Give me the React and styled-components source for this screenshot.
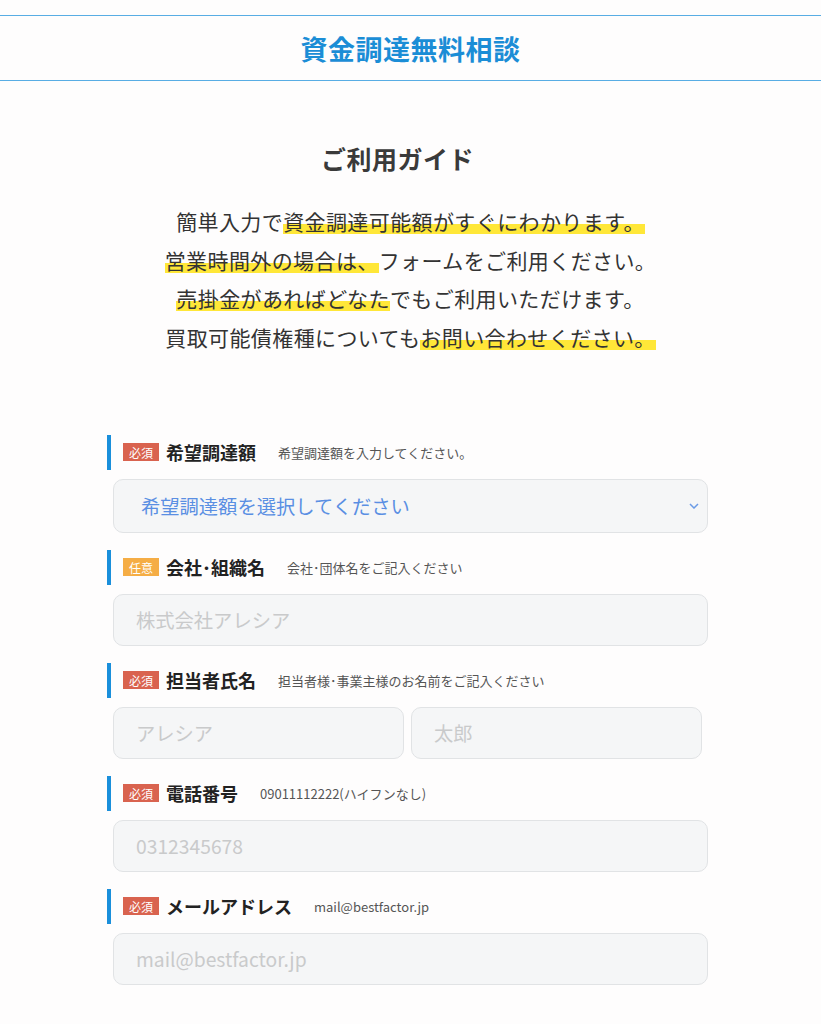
import React from 'react'
import styled, { createGlobalStyle } from 'styled-components'

const GlobalStyle = createGlobalStyle`
  body {
    margin: 0;
    background: #fefdfd;
    font-family: "Noto Sans CJK JP", "Noto Sans", sans-serif;
    color: #333;
  }
`

const Page = styled.div`
  padding-top: 15px;
  padding-bottom: 40px;
`

const Header = styled.header`
  border-top: 1px solid #58ade4;
  border-bottom: 1px solid #58ade4;
  height: 64px;
  display: flex;
  align-items: center;
  justify-content: center;
`

const HeaderTitle = styled.h1`
  margin: 0;
  font-size: 27px;
  font-weight: 700;
  color: #1b8dd6;
  letter-spacing: 0.5px;
`

const Guide = styled.section`
  text-align: center;
  padding-top: 58px;
`

const GuideTitle = styled.h2`
  margin: 0;
  padding-right: 26px;
  font-size: 25px;
  line-height: 38px;
  font-weight: 700;
  color: #3a3a3a;
  letter-spacing: 0.5px;
`

const GuideText = styled.p`
  margin: 25px 0 0;
  font-size: 21px;
  line-height: 38.7px;
  color: #333;
  letter-spacing: 0.4px;
`

const Mark = styled.span`
  background: linear-gradient(transparent 60%, #ffe738 60%, #ffe738 92%, transparent 92%);
`

const Form = styled.form`
  width: 607px;
  margin: 78px auto 0;
`

const Field = styled.div`
  margin-bottom: 17px;
`

const LabelRow = styled.div`
  height: 35px;
  border-left: 4px solid #1a8fdb;
  padding-left: 12px;
  display: flex;
  align-items: center;
  margin-bottom: 9px;
`

const Badge = styled.span`
  display: inline-flex;
  align-items: center;
  justify-content: center;
  width: 36px;
  height: 18px;
  font-size: 12px;
  color: #fff;
  background: ${p => (p.$optional ? '#f5ad45' : '#d9634f')};
  margin-right: 7px;
`

const Label = styled.span`
  font-size: 18px;
  font-weight: 700;
  color: #222;
`

const Hint = styled.span`
  font-size: 13px;
  color: #555;
  margin-left: 22px;
`

const Box = styled.div`
  box-sizing: border-box;
  height: ${p => (p.$tall ? '54px' : '52px')};
  margin: 0 6px;
  background: #f5f6f7;
  border: 1px solid #e1e3e5;
  border-radius: 10px;
  display: flex;
  align-items: center;
  padding-left: ${p => (p.$tall ? '27px' : '22px')};
  padding-right: 8px;
  font-size: 19.3px;
  color: ${p => (p.$select ? '#5a8fe3' : '#c9cacb')};
`

const Split = styled.div`
  display: flex;
  gap: 7px;
  margin: 0 6px;
  & > div {
    margin: 0;
    width: 291px;
  }
`

const Grow = styled.span`
  flex: 1;
`

const Chevron = () => (
  <svg width="10" height="6" viewBox="0 0 10 6">
    <polyline points="1,1 5,5 9,1" fill="none" stroke="#6b9be6" strokeWidth="1.5" />
  </svg>
)

const App = () => {
  return (<>
    <GlobalStyle />
    <Page>
      <Header>
        <HeaderTitle>資金調達無料相談</HeaderTitle>
      </Header>
      <Guide>
        <GuideTitle>ご利用ガイド</GuideTitle>
        <GuideText>
          簡単入力で<Mark>資金調達可能額がすぐにわかります。</Mark><br />
          <Mark>営業時間外の場合は、</Mark>フォームをご利用ください。<br />
          <Mark>売掛金があればどなた</Mark>でもご利用いただけます。<br />
          買取可能債権種についても<Mark>お問い合わせください。</Mark>
        </GuideText>
      </Guide>
      <Form>
        <Field>
          <LabelRow>
            <Badge>必須</Badge>
            <Label>希望調達額</Label>
            <Hint>希望調達額を入力してください。</Hint>
          </LabelRow>
          <Box $tall $select>
            <Grow>希望調達額を選択してください</Grow>
            <Chevron />
          </Box>
        </Field>
        <Field>
          <LabelRow>
            <Badge $optional>任意</Badge>
            <Label>会社･組織名</Label>
            <Hint>会社･団体名をご記入ください</Hint>
          </LabelRow>
          <Box>株式会社アレシア</Box>
        </Field>
        <Field>
          <LabelRow>
            <Badge>必須</Badge>
            <Label>担当者氏名</Label>
            <Hint>担当者様･事業主様のお名前をご記入ください</Hint>
          </LabelRow>
          <Split>
            <Box>アレシア</Box>
            <Box>太郎</Box>
          </Split>
        </Field>
        <Field>
          <LabelRow>
            <Badge>必須</Badge>
            <Label>電話番号</Label>
            <Hint>09011112222(ハイフンなし)</Hint>
          </LabelRow>
          <Box>0312345678</Box>
        </Field>
        <Field>
          <LabelRow>
            <Badge>必須</Badge>
            <Label>メールアドレス</Label>
            <Hint>mail@bestfactor.jp</Hint>
          </LabelRow>
          <Box>mail@bestfactor.jp</Box>
        </Field>
      </Form>
    </Page>
  </>)
}
export default App
